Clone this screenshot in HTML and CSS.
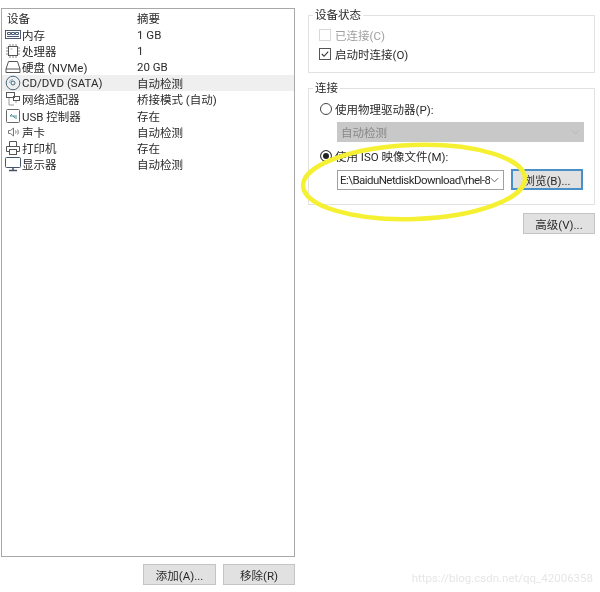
FILE: index.html
```html
<!DOCTYPE html>
<html lang="zh-CN">
<head>
    <meta charset="UTF-8">
    <title>虚拟机设置</title>
    <link rel="stylesheet" href="styles.css">
</head>
<body>
    <div class="dialog">
        <div class="left">
            <div class="device-list">
                <div class="row head">
                    <span class="col-name">设备</span>
                    <span class="col-sum">摘要</span>
                </div>
                <div class="row">
                    <span class="col-name">
                        <svg class="ico" viewBox="0 0 16 16" fill="none" stroke="#4a5a70"><rect x="0.5" y="3.500" width="15" height="8"/><path d="M2.500 5.500h3v2h-3zM6.500 5.500h3v2h-3zM10.500 5.500h3v2h-3zM2 9.500h12"/></svg>
                        内存
                    </span>
                    <span class="col-sum">1 GB</span>
                </div>
                <div class="row">
                    <span class="col-name">
                        <svg class="ico" viewBox="0 0 16 16" fill="none" stroke="#555"><rect x="3.500" y="3.500" width="9" height="9"/><path d="M1 5h2M1 8h2M1 11h2M13 5h2M13 8h2M13 11h2M5 1v2M8 1v2M11 1v2M5 13v2M8 13v2M11 13v2" stroke="#888"/><path d="M5.500 6h2" stroke="#aaa"/></svg>
                        处理器
                    </span>
                    <span class="col-sum">1</span>
                </div>
                <div class="row">
                    <span class="col-name">
                        <svg class="ico" viewBox="0 0 16 16" fill="none" stroke="#555"><path d="M3.500 2.500h9l2.500 7.500v3.500h-14v-3.500zM1 10h14"/></svg>
                        硬盘 (NVMe)
                    </span>
                    <span class="col-sum">20 GB</span>
                </div>
                <div class="row selected">
                    <span class="col-name">
                        <svg class="ico" viewBox="0 0 16 16" fill="none" stroke="#4a6a80"><circle cx="8" cy="8" r="6.800"/><circle cx="8" cy="8" r="2"/><path d="M4.500 8a3.500 3.500 0 0 1 3.500-3.500" stroke="#8ab"/></svg>
                        CD/DVD (SATA)
                    </span>
                    <span class="col-sum">自动检测</span>
                </div>
                <div class="row">
                    <span class="col-name">
                        <svg class="ico" viewBox="0 0 16 16" fill="none" stroke="#555"><rect x="1.500" y="1.500" width="8" height="5"/><rect x="8.500" y="5.500" width="6" height="4"/><path d="M4 7v7h5M11 10v2" stroke="#999"/></svg>
                        网络适配器
                    </span>
                    <span class="col-sum">桥接模式 (自动)</span>
                </div>
                <div class="row">
                    <span class="col-name">
                        <svg class="ico" viewBox="0 0 16 16" fill="none" stroke="#666"><rect x="1.500" y="1.500" width="13" height="13" rx="1"/><path d="M12 8H5l2-2M8 8l2 2h2" stroke="#4a8a9a"/></svg>
                        USB 控制器
                    </span>
                    <span class="col-sum">存在</span>
                </div>
                <div class="row">
                    <span class="col-name">
                        <svg class="ico" viewBox="0 0 16 16" fill="none" stroke="#777"><path d="M3.500 6.500h2l3-2.500v8l-3-2.500h-2zM10.500 6.500c.7 1 .7 2 0 3M12.500 5.500c1 1.500 1 3.500 0 5"/></svg>
                        声卡
                    </span>
                    <span class="col-sum">自动检测</span>
                </div>
                <div class="row">
                    <span class="col-name">
                        <svg class="ico" viewBox="0 0 16 16" fill="none" stroke="#555"><path d="M4.500 6V1.500h7V6M4 11.500H1.500v-5h13v5H12"/><rect x="4.500" y="9.500" width="7" height="5"/></svg>
                        打印机
                    </span>
                    <span class="col-sum">存在</span>
                </div>
                <div class="row">
                    <span class="col-name">
                        <svg class="ico" viewBox="0 0 16 16" fill="none" stroke="#44546a"><rect x="0.500" y="1.500" width="15" height="10" rx="1"/><path d="M4 14.500h8M8 12v2" stroke-width="1.500"/></svg>
                        显示器
                    </span>
                    <span class="col-sum">自动检测</span>
                </div>
            </div>
            <div class="left-buttons">
                <button class="btn btn-add">添加(A)...</button>
                <button class="btn btn-remove">移除(R)</button>
            </div>
        </div>

        <div class="right">
            <fieldset class="group group-status">
                <legend>设备状态</legend>
                <label class="opt disabled"><span class="check"></span>已连接(C)</label>
                <label class="opt">
                    <span class="check on">
                        <svg viewBox="0 0 11 11" fill="none" stroke="#333" stroke-width="1.200"><path d="M2 5.500l2.500 2.500 4.500-5"/></svg>
                    </span>
                    启动时连接(O)
                </label>
            </fieldset>

            <fieldset class="group group-conn">
                <legend>连接</legend>
                <label class="opt"><span class="radio"></span>使用物理驱动器(P):</label>
                <div class="select select-off">
                    <span>自动检测</span>
                    <svg class="caret" viewBox="0 0 10 6" fill="none" stroke="#b5b5b5"><path d="M1 1l4 4 4-4"/></svg>
                </div>
                <label class="opt opt-iso"><span class="radio on"></span>使用 ISO 映像文件(M):</label>
                <div class="iso-row">
                    <div class="select select-iso">
                        <span class="path">E:\BaiduNetdiskDownload\rhel-8</span>
                        <svg class="caret" viewBox="0 0 10 6" fill="none" stroke="#555"><path d="M1 1l4 4 4-4"/></svg>
                    </div>
                    <button class="btn btn-browse">浏览(B)...</button>
                </div>
            </fieldset>

            <div class="adv-row">
                <button class="btn btn-adv">高级(V)...</button>
            </div>
        </div>
    </div>

    <!-- yellow marker drawn over the screenshot -->
    <svg class="marker" viewBox="0 0 600 592" fill="none">
        <ellipse cx="414" cy="182" rx="111" ry="37" transform="rotate(-2 414 182)" stroke="#f5f032" stroke-width="4.500"/>
    </svg>

    <div class="watermark">https://blog.csdn.net/qq_42006358</div>
</body>
</html>
```

FILE: styles.css
```css
* {
    margin: 0;
    padding: 0;
    box-sizing: border-box;
    font-family: Roboto, "Noto Sans CJK SC", sans-serif;
}

body {
    background: white;
    color: #2a2a2a;
    font-size: 11.5px;
    width: 600px;
    height: 592px;
    overflow: hidden;
    position: relative;
}

.dialog {
    display: flex;
    padding: 8px 5px 0 1px;
    filter: blur(0.3px);
}

.left {
    width: 294px;
}

.device-list {
    height: 549px;
    border: 1px solid #a8a8a8;
    padding-top: 1px;
}

.row {
    display: flex;
    align-items: center;
    height: 16.1px;
    white-space: nowrap;
}

.row.head {
    height: 16px;
    margin-bottom: 1px;
}

.row.selected {
    background: #efefef;
}

.col-name {
    display: flex;
    align-items: center;
    width: 135px;
    padding-left: 3px;
}

.head .col-name {
    padding-left: 5px;
}

.ico {
    width: 16px;
    height: 16px;
    flex: none;
    margin-right: 1px;
}

.left-buttons {
    display: flex;
    justify-content: flex-end;
    gap: 7px;
    margin-top: 7px;
}

.btn {
    height: 21px;
    background: #e1e1e1;
    border: 1px solid #c4c4c4;
    font-size: 11.5px;
    color: #2a2a2a;
}

.btn-add {
    width: 73px;
}

.btn-remove {
    width: 72px;
}

.right {
    width: 287px;
    margin-left: 13px;
}

.group {
    border: 1px solid #e2e2e2;
    padding: 0 10px;
}

.group legend {
    line-height: 14px;
    padding: 0 2px;
    margin-left: -6px;
}

.group-status {
    height: 65px;
    padding-top: 4px;
}

.group-conn {
    height: 124px;
    margin-top: 8px;
    padding-top: 5px;
}

.opt {
    display: flex;
    align-items: center;
    gap: 3px;
    height: 18px;
}

.opt + .opt {
    margin-top: 1px;
}

.opt.disabled {
    color: #a0a0a0;
}

.check {
    width: 12px;
    height: 12px;
    border: 1px solid #d8d8d8;
    background: white;
    margin-right: 1px;
}

.check.on {
    border-color: #555;
}

.check svg {
    display: block;
    width: 10px;
    height: 10px;
}

.radio {
    width: 12px;
    height: 12px;
    margin-left: 1px;
    border: 1px solid #444;
    border-radius: 50%;
    background: white;
}

.radio.on {
    background: #222;
    box-shadow: inset 0 0 0 2px white;
}

.select {
    display: flex;
    align-items: center;
    justify-content: space-between;
    height: 20px;
    padding: 0 4px;
}

.select-off {
    width: 247px;
    margin: 4px 0 0 18px;
    background: #c8c8c8;
    color: #888;
}

.opt-iso {
    margin-top: 5px;
}

.iso-row {
    display: flex;
    align-items: center;
    gap: 7px;
    margin: 4px 0 0 18px;
}

.select-iso {
    width: 167px;
    padding: 0 4px 0 2px;
    border: 1px solid #a0a0a0;
    background: white;
    overflow: hidden;
}

.path {
    width: 150px;
    overflow: hidden;
    white-space: nowrap;
    letter-spacing: -0.55px;
}

.caret {
    width: 9px;
    height: 6px;
    flex: none;
}

.btn-browse {
    width: 72px;
    background: #e1e1e1;
    border: 2px solid #4a90c8;
}

.adv-row {
    display: flex;
    justify-content: flex-end;
    margin-top: 8px;
}

.btn-adv {
    width: 72px;
}

.marker {
    position: absolute;
    left: 0;
    top: 0;
    width: 600px;
    height: 592px;
    pointer-events: none;
}

.watermark {
    position: absolute;
    right: 7px;
    top: 571px;
    color: #e6e6e6;
    font-size: 11.5px;
    filter: blur(0.6px);
}
```
